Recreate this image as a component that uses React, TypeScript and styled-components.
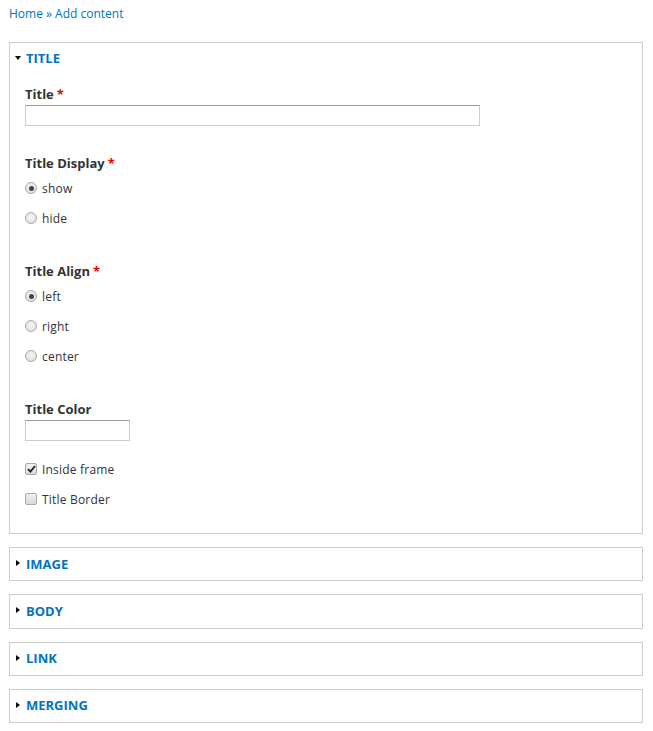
import React from "react";
import styled, { createGlobalStyle } from "styled-components";

const Global = createGlobalStyle`
  html, body { margin: 0; padding: 0; background: #fff; }
  body { font-family: "Open Sans", "Noto Sans", sans-serif; font-size: 12px; color: #333; }
`;

const Page = styled.div`
  padding: 5px 10px 20px 9px;
`;

const Breadcrumb = styled.div`
  height: 18px;
  line-height: 18px;
  font-size: 12px;
  color: #0074bd;
  margin-bottom: 19px;
  a { color: #0074bd; text-decoration: none; }
`;

const Fieldset = styled.section<{ $open?: boolean }>`
  border: 1px solid #ccc;
  margin-bottom: 13px;
  padding: ${(p) => (p.$open ? "6px 15px 25px 15px" : "6.5px 15px 7.83px 15px")};
`;

const Legend = styled.div<{ $open?: boolean }>`
  position: relative;
  height: 18px;
  line-height: 18px;
  margin-left: -10px;
  padding-left: 11px;
  font-size: 13px;
  font-weight: 700;
  color: #0074bd;
  text-transform: uppercase;
  &::before {
    content: "";
    position: absolute;
    top: 50%;
    left: 0;
    width: 0;
    height: 0;
    ${(p) =>
      p.$open
        ? `border-left: 3.5px solid transparent; border-right: 3.5px solid transparent; border-top: 4px solid #000; margin-top: -2px;`
        : `border-top: 3.5px solid transparent; border-bottom: 3.5px solid transparent; border-left: 4px solid #000; margin-top: -3.5px; left: 1px;`}
  }
`;

const Group = styled.div<{ $top: number }>`
  margin-top: ${(p) => p.$top}px;
`;

const Label = styled.div`
  height: 18px;
  line-height: 18px;
  font-size: 13px;
  font-weight: 700;
  color: #333;
`;

const Req = styled.span`
  color: #e00;
  margin-left: 3px;
`;

const TextInput = styled.div<{ $w: number }>`
  margin-top: 2px;
  width: ${(p) => p.$w}px;
  height: 21px;
  box-sizing: border-box;
  border: 1px solid #ccc;
  border-top-color: #999;
  background: #fff;
`;

const Options = styled.div`
  margin-top: 7px;
  display: flex;
  flex-direction: column;
  gap: 12px;
`;

const Option = styled.div`
  display: flex;
  align-items: center;
  height: 18px;
  gap: 5px;
  font-size: 12px;
  color: #333;
  letter-spacing: 0.2px;
`;

const Radio = styled.span<{ $on?: boolean }>`
  width: 12px;
  height: 12px;
  box-sizing: border-box;
  border-radius: 50%;
  border: 1px solid #a9a9a9;
  background: radial-gradient(circle at 50% 40%, #f4f4f4 0%, #dcdcdc 100%);
  display: flex;
  align-items: center;
  justify-content: center;
  &::after {
    content: "";
    display: ${(p) => (p.$on ? "block" : "none")};
    width: 5px;
    height: 5px;
    border-radius: 50%;
    background: #444;
  }
`;

const Check = styled.span`
  width: 12px;
  height: 12px;
  box-sizing: border-box;
  border-radius: 2px;
  border: 1px solid #a9a9a9;
  background: linear-gradient(#f2f2f2, #d8d8d8);
  display: flex;
  align-items: center;
  justify-content: center;
  svg { display: block; }
`;

const Checks = styled.div`
  margin-top: 19px;
  display: flex;
  flex-direction: column;
  gap: 12px;
`;

function RadioOpt({ label, on }: { label: string; on?: boolean }) {
  return (
    <Option>
      <Radio $on={on} />
      <span>{label}</span>
    </Option>
  );
}

function CheckOpt({ label, on }: { label: string; on?: boolean }) {
  return (
    <Option>
      <Check>
        {on && (
          <svg width="9" height="8" viewBox="0 0 9 8">
            <path d="M1 4.2 L3.4 6.6 L8 1" stroke="#222" strokeWidth="1.8" fill="none" />
          </svg>
        )}
      </Check>
      <span>{label}</span>
    </Option>
  );
}

export default function App() {
  return (
    <>
      <Global />
      <Page>
        <Breadcrumb>
          <a href="#">Home</a> » <a href="#">Add content</a>
        </Breadcrumb>
        <Fieldset $open>
          <Legend $open>Title</Legend>
          <Group $top={18}>
            <Label>
              Title<Req>*</Req>
            </Label>
            <TextInput $w={455} />
          </Group>
          <Group $top={28}>
            <Label>
              Title Display<Req>*</Req>
            </Label>
            <Options>
              <RadioOpt label="show" on />
              <RadioOpt label="hide" />
            </Options>
          </Group>
          <Group $top={35}>
            <Label>
              Title Align<Req>*</Req>
            </Label>
            <Options>
              <RadioOpt label="left" on />
              <RadioOpt label="right" />
              <RadioOpt label="center" />
            </Options>
          </Group>
          <Group $top={35}>
            <Label>Title Color</Label>
            <TextInput $w={105} />
          </Group>
          <Checks>
            <CheckOpt label="Inside frame" on />
            <CheckOpt label="Title Border" />
          </Checks>
        </Fieldset>
        {["Image", "Body", "Link", "Merging"].map((t) => (
          <Fieldset key={t}>
            <Legend>{t}</Legend>
          </Fieldset>
        ))}
      </Page>
    </>
  );
}
